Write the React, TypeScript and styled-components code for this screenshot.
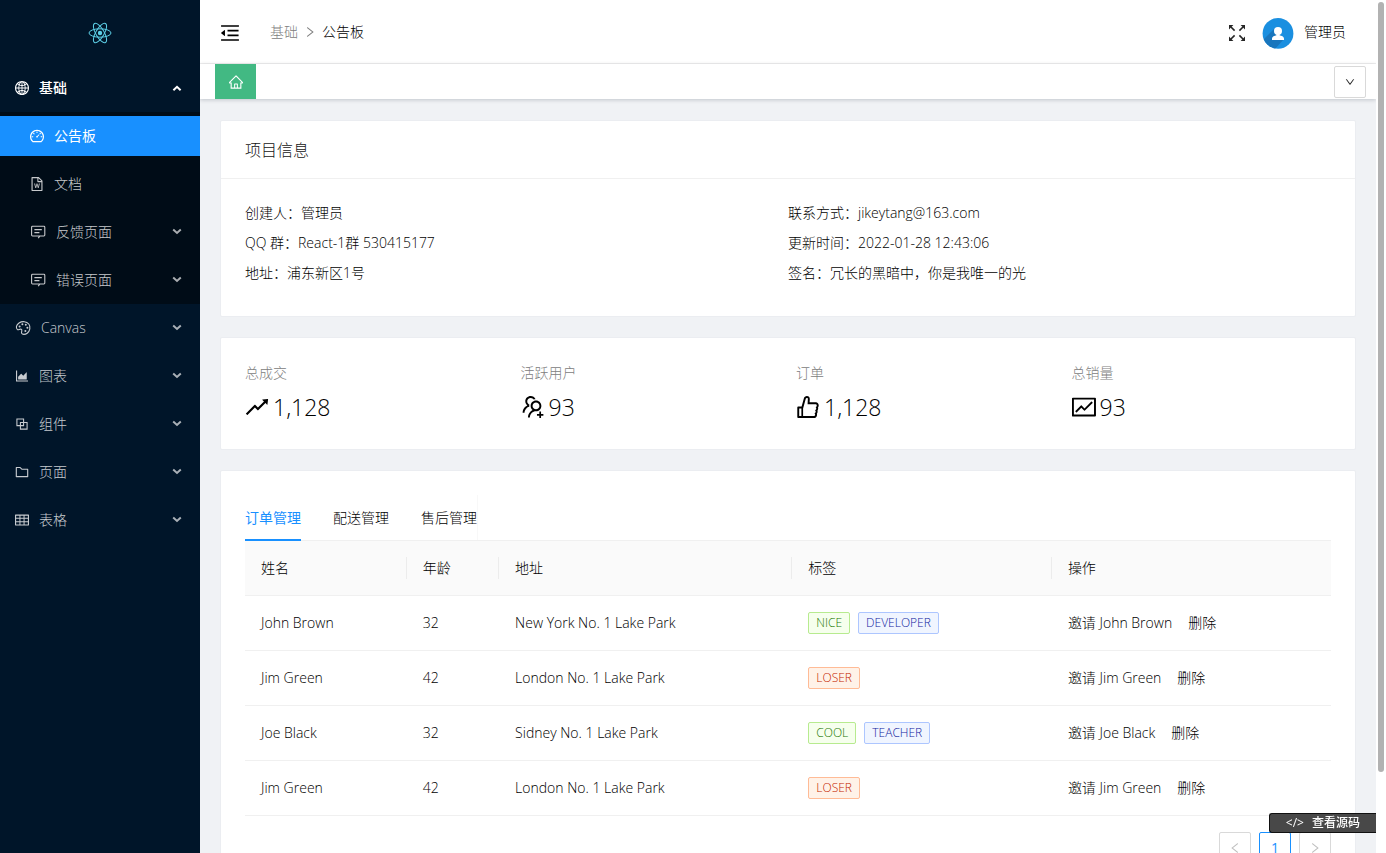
import React from 'react';
import styled, { createGlobalStyle, css } from 'styled-components';
import type { IconType } from 'react-icons';
import {
  AiOutlineGlobal, AiOutlineDashboard, AiOutlineFileWord, AiOutlineAreaChart, AiOutlineBlock,
  AiOutlineFolder, AiOutlineTable, AiOutlineHome, AiOutlineMenuFold, AiOutlineUsergroupAdd,
  AiOutlineLike, AiOutlineFund, AiOutlineRise, AiOutlineLeft, AiOutlineRight, AiOutlineDown,
} from 'react-icons/ai';

const GlobalStyle = createGlobalStyle`
  *, *::before, *::after { box-sizing: border-box; }
  body {
    margin: 0;
    font-family: "Open Sans", "Noto Sans CJK SC", sans-serif;
    font-size: 14px;
    font-weight: 300;
    line-height: 22px;
    color: #000;
    background: #fff;
  }
  button { font: inherit; color: inherit; background: none; border: 0; padding: 0; cursor: pointer; }
  a { color: inherit; text-decoration: none; }
  svg { display: block; flex: none; }
  h2, dl, dd, dt, ul, ol, p { margin: 0; padding: 0; font-weight: inherit; list-style: none; }
`;

const Shell = styled.div`
  display: flex;
  height: 100vh;
  overflow: hidden;
`;

const Sidebar = styled.nav`
  flex: 0 0 200px;
  background: #001529;
  color: rgba(255, 255, 255, 0.78);
`;

const Logo = styled.a`
  display: flex;
  align-items: center;
  justify-content: center;
  height: 64px;
  padding-top: 2px;
`;

const MenuItem = styled.li`
  padding: 4px 0;
`;

const SubMenu = styled.ul`
  background: #000c17;
`;

const MenuButton = styled.button<{ $level?: number; $state?: 'open' | 'selected' }>`
  display: flex;
  align-items: center;
  gap: 10px;
  width: 100%;
  height: 40px;
  padding: 0 17px 0 ${(p) => (p.$level === 2 ? 30 : 15)}px;
  text-align: left;
  ${(p) => p.$state === 'open' && css`color: #fff; font-weight: 500;`}
  ${(p) => p.$state === 'selected' && css`color: #fff; background: #1890ff; font-weight: 400;`}
`;

const MenuLabel = styled.span`
  flex: 1;
`;

const Main = styled.div`
  display: flex;
  flex: 1;
  flex-direction: column;
  min-width: 0;
  overflow: hidden;
  background: #f0f2f5;
`;

const ScrollTrack = styled.div`
  flex: 0 0 10px;
  padding: 2px 2px 0;
  background: #fff;
`;

const ScrollThumb = styled.div`
  height: 770px;
  max-height: 100%;
  border-radius: 3px;
  background: #b2b2b2;
`;

const Header = styled.header`
  display: flex;
  flex: none;
  align-items: center;
  height: 64px;
  padding: 2px 30px 0 20px;
  background: #fff;
  border-bottom: 1px solid #f0f0f0;
`;

const Crumbs = styled.ol`
  display: flex;
  flex: 1;
  align-items: center;
  gap: 6px;
  margin-left: 30px;
  padding-bottom: 2px;
`;

const Crumb = styled.li<{ $muted?: boolean }>`
  display: flex;
  color: ${(p) => (p.$muted ? '#808080' : '#000')};
`;

const UserArea = styled.div`
  display: flex;
  align-items: center;
  gap: 10px;
`;

const UserName = styled.span`
  padding-bottom: 2px;
`;

const FullButton = styled.button`
  margin-right: 6px;
`;

const TabBar = styled.div`
  z-index: 1;
  display: flex;
  flex: none;
  align-items: flex-start;
  justify-content: space-between;
  height: 35px;
  padding: 0 10px 0 15px;
  background: #fff;
  box-shadow: 0 1px 4px rgba(0, 21, 41, 0.2);
`;

const HomeTab = styled.button`
  display: flex;
  align-items: center;
  justify-content: center;
  width: 41px;
  height: 35px;
  color: #fff;
  background: #42b983;
`;

const SquareButton = styled.button<{ $tone?: 'active' | 'disabled' }>`
  display: flex;
  align-items: center;
  justify-content: center;
  width: 32px;
  height: 32px;
  border: 1px solid ${(p) => (p.$tone === 'active' ? '#1890ff' : '#d9d9d9')};
  border-radius: 2px;
  background: #fff;
  color: ${(p) => (p.$tone === 'active' ? '#1890ff' : p.$tone === 'disabled' ? '#bfbfbf' : '#262626')};
  font-weight: 400;
`;

const TabMenu = styled.div`
  padding-top: 2px;
`;

const Content = styled.main`
  display: flex;
  flex: 1;
  flex-direction: column;
  gap: 20px;
  min-height: 0;
  padding: 21px 20px 20px;
  overflow-y: auto;
  scrollbar-width: none;
`;

const Card = styled.section`
  flex: none;
  border: 1px solid #ebedf1;
  border-radius: 2px;
  background: #fff;
`;

const CardHead = styled.header`
  padding: 17px 24px 16px;
  border-bottom: 1px solid #f0f0f0;
`;

const CardTitle = styled.h2`
  color: #141414;
  font-size: 16px;
  line-height: 24px;
`;

const CardBody = styled.div`
  padding: 23px 24px 24px;
`;

const InfoGrid = styled.dl`
  display: grid;
  grid-template-columns: 1fr 1fr;
`;

const InfoRow = styled.div`
  display: flex;
  height: 30px;
`;

const StatGrid = styled.dl`
  display: grid;
  grid-template-columns: repeat(4, 1fr);
  gap: 16px;
  padding-top: 1px;
`;

const StatLabel = styled.dt`
  margin-bottom: 4px;
  color: #808080;
`;

const StatValue = styled.dd`
  display: flex;
  align-items: center;
  gap: 4px;
  height: 37px;
  font-size: 23px;
  line-height: 36px;
`;

const Tabs = styled.div`
  display: flex;
  padding-top: 1px;
  border-bottom: 1px solid #f0f0f0;
`;

const TabList = styled.div`
  display: flex;
  gap: 32px;
  border-right: 1px solid #f8f8f8;
`;

const Tab = styled.button<{ $active?: boolean }>`
  margin-bottom: -1px;
  padding: 12px 0 10px;
  border-bottom: 2px solid ${(p) => (p.$active ? '#1890ff' : 'transparent')};
  color: ${(p) => (p.$active ? '#1890ff' : '#000')};
  ${(p) => p.$active && css`font-weight: 400;`}
`;

const Table = styled.table`
  width: 100%;
  border-collapse: separate;
  border-spacing: 0;
  table-layout: fixed;
`;

const Th = styled.th<{ $width?: string }>`
  width: ${(p) => p.$width ?? 'auto'};
  padding: 0;
  border-bottom: 1px solid #f0f0f0;
  background: #fafafa;
  font-weight: inherit;
  text-align: left;
`;

const ThLabel = styled.div`
  margin: 16px 0;
  padding: 0 16px;
  border-right: 1px solid #ececec;
  ${Th}:last-child & { border-right: 0; }
`;

const Td = styled.td`
  height: 55px;
  padding: 0 16px;
  border-bottom: 1px solid #f0f0f0;
`;

const Inline = styled.div<{ $gap: number }>`
  display: flex;
  align-items: center;
  gap: ${(p) => p.$gap}px;
`;

const tones = {
  green: ['#237804', '#f6ffed', '#b7eb8f'],
  geekblue: ['#10239e', '#f0f5ff', '#adc6ff'],
  volcano: ['#c41d00', '#fff2e8', '#ffbb96'],
};

const Tag = styled.span<{ $tone: keyof typeof tones }>`
  padding: 0 7px;
  border: 1px solid ${(p) => tones[p.$tone][2]};
  border-radius: 2px;
  background: ${(p) => tones[p.$tone][1]};
  color: ${(p) => tones[p.$tone][0]};
  font-size: 12px;
  line-height: 20px;
`;

const Pagination = styled.div`
  display: flex;
  justify-content: flex-end;
  gap: 8px;
  padding-top: 16px;
`;

const SourceLink = styled.a`
  position: fixed;
  right: 10px;
  bottom: 20px;
  z-index: 2;
  display: flex;
  align-items: center;
  gap: 8px;
  height: 20px;
  padding: 0 16px;
  border: 1px solid #111;
  border-right: 0;
  border-radius: 3px 0 0 3px;
  background: #484848;
  color: #fff;
  font-size: 12px;
  font-weight: 500;
  line-height: 18px;
`;

// Crops the icon set's built-in margin so the glyph fills its box.
function Icon({ as: Glyph, size = 14 }: { as: IconType; size?: number }) {
  return <Glyph size={size} viewBox="64 64 896 896" />;
}

function ReactMark() {
  return (
    <svg width="24" height="24" viewBox="0 0 24 24" fill="none" stroke="#5ccfe6" strokeWidth="1">
      <circle cx="12" cy="12" r="2.2" fill="#5ccfe6" stroke="none" />
      <ellipse cx="12" cy="12" rx="11" ry="4.2" />
      <ellipse cx="12" cy="12" rx="11" ry="4.2" transform="rotate(60 12 12)" />
      <ellipse cx="12" cy="12" rx="11" ry="4.2" transform="rotate(120 12 12)" />
    </svg>
  );
}

function FeedbackIcon() {
  return (
    <svg width="16" height="16" viewBox="0 0 16 16" fill="none" stroke="currentColor" strokeWidth="1.1">
      <path d="M10.4 12 H13.9 a.9.9 0 0 0 .9-.9 V3.2 a.9.9 0 0 0-.9-.9 H2.5 a.9.9 0 0 0-.9.9 v7.9 a.9.9 0 0 0 .9.9 H9.9 L8.2 14.2" />
      <path d="M4.4 5.6 h7.4 M4.4 8.6 h5" />
    </svg>
  );
}

function PaletteIcon() {
  return (
    <svg width="16" height="16" viewBox="0 0 16 16" fill="none" stroke="currentColor" strokeWidth="1.1">
      <path d="M6.2 9.2 C4.6 8.6 3.6 10.4 2.4 9.6 C.6 8.2 1.2 4.8 4 3 C7.2 .9 11.6 1.3 13.8 4 C15.9 6.8 15 11.2 12.2 13.2 C10.2 14.7 7.4 14.8 6.6 13.3 C5.9 11.9 8 10.2 6.2 9.2 Z" />
      <g fill="currentColor" stroke="none">
        <circle cx="4.6" cy="6.4" r="1" /><circle cx="7.4" cy="4.3" r="1" /><circle cx="10.8" cy="4.8" r="1" />
        <circle cx="12.4" cy="7.8" r="1" /><circle cx="10.4" cy="11" r="1" />
      </g>
    </svg>
  );
}

function Chevron({ up }: { up?: boolean }) {
  return (
    <svg width="12" height="12" viewBox="0 0 12 12" fill="none" stroke="currentColor" strokeWidth="2" opacity={up ? 1 : 0.85}>
      <path d={up ? 'M2.4 8.2 L6 4.8 L9.6 8.2' : 'M2.2 3.6 L6 7 L9.8 3.6'} />
    </svg>
  );
}

function FullscreenIcon() {
  return (
    <svg width="18" height="18" viewBox="0 0 18 18" fill="#262626" stroke="#262626" strokeWidth="1.6">
      <path d="M3 3 L6.6 6.6 M15 3 L11.4 6.6 M3 15 L6.6 11.4 M15 15 L11.4 11.4" />
      <path stroke="none" d="M1 1 H5.4 L1 5.4 Z M17 1 V5.4 L12.6 1 Z M1 17 V12.6 L5.4 17 Z M17 17 H12.6 L17 12.6 Z" />
    </svg>
  );
}

function Avatar() {
  return (
    <svg width="32" height="32" viewBox="0 0 32 32">
      <defs><clipPath id="avatar-disc"><circle cx="16" cy="16.4" r="15.4" /></clipPath></defs>
      <g clipPath="url(#avatar-disc)">
        <rect width="32" height="32" fill="#1a8fe0" />
        <path d="M12 12 L0 24 V32 H13 L22 22 Z" fill="#1976bd" />
      </g>
      <circle cx="16" cy="14" r="4" fill="#fff" />
      <path d="M10 23 V21.6 C10 19.6 12.6 18.6 14.4 18.2 V16 H17.6 V18.2 C19.4 18.6 22 19.6 22 21.6 V23 Z" fill="#fff" />
    </svg>
  );
}

const children = [
  { label: '公告板', icon: <Icon as={AiOutlineDashboard} />, selected: true },
  { label: '文档', icon: <Icon as={AiOutlineFileWord} /> },
  { label: '反馈页面', icon: <FeedbackIcon />, more: true },
  { label: '错误页面', icon: <FeedbackIcon />, more: true },
];

const roots = [
  { label: 'Canvas', icon: <PaletteIcon /> },
  { label: '图表', icon: <Icon as={AiOutlineAreaChart} /> },
  { label: '组件', icon: <Icon as={AiOutlineBlock} /> },
  { label: '页面', icon: <Icon as={AiOutlineFolder} /> },
  { label: '表格', icon: <Icon as={AiOutlineTable} /> },
];

const info = [
  { label: '创建人', value: '管理员' },
  { label: '联系方式', value: 'jikeytang@163.com' },
  { label: 'QQ 群', value: 'React-1群 530415177' },
  { label: '更新时间', value: '2022-01-28 12:43:06' },
  { label: '地址', value: '浦东新区1号' },
  { label: '签名', value: '冗长的黑暗中\uFF0C你是我唯一的光' },
];

const stats = [
  { label: '总成交', value: '1,128', icon: AiOutlineRise },
  { label: '活跃用户', value: '93', icon: AiOutlineUsergroupAdd },
  { label: '订单', value: '1,128', icon: AiOutlineLike },
  { label: '总销量', value: '93', icon: AiOutlineFund },
];

const columns: [string, string?][] = [
  ['姓名', '14.9%'], ['年龄', '8.5%'], ['地址', '27%'], ['标签', '23.9%'], ['操作'],
];

type Row = { name: string; age: number; address: string; tags: [string, keyof typeof tones][] };

const rows: Row[] = [
  { name: 'John Brown', age: 32, address: 'New York No. 1 Lake Park', tags: [['NICE', 'green'], ['DEVELOPER', 'geekblue']] },
  { name: 'Jim Green', age: 42, address: 'London No. 1 Lake Park', tags: [['LOSER', 'volcano']] },
  { name: 'Joe Black', age: 32, address: 'Sidney No. 1 Lake Park', tags: [['COOL', 'green'], ['TEACHER', 'geekblue']] },
  { name: 'Jim Green', age: 42, address: 'London No. 1 Lake Park', tags: [['LOSER', 'volcano']] },
];

export default function App() {
  return (
    <>
      <GlobalStyle />
      <Shell>
        <Sidebar>
          <Logo href="#" aria-label="首页"><ReactMark /></Logo>
          <ul>
            <MenuItem>
              <MenuButton $state="open"><Icon as={AiOutlineGlobal} /><MenuLabel>基础</MenuLabel><Chevron up /></MenuButton>
            </MenuItem>
            <li>
              <SubMenu>
                {children.map((c) => (
                  <MenuItem key={c.label}>
                    <MenuButton $level={2} $state={c.selected ? 'selected' : undefined}>
                      {c.icon}<MenuLabel>{c.label}</MenuLabel>{c.more && <Chevron />}
                    </MenuButton>
                  </MenuItem>
                ))}
              </SubMenu>
            </li>
            {roots.map((r) => (
              <MenuItem key={r.label}>
                <MenuButton>{r.icon}<MenuLabel>{r.label}</MenuLabel><Chevron /></MenuButton>
              </MenuItem>
            ))}
          </ul>
        </Sidebar>

        <Main>
          <Header>
            <button aria-label="收起菜单"><Icon as={AiOutlineMenuFold} size={20} /></button>
            <Crumbs>
              <Crumb $muted><a href="#">基础</a></Crumb>
              <Crumb $muted><Icon as={AiOutlineRight} size={12} /></Crumb>
              <Crumb>公告板</Crumb>
            </Crumbs>
            <UserArea>
              <FullButton aria-label="全屏"><FullscreenIcon /></FullButton>
              <Avatar />
              <UserName>管理员</UserName>
            </UserArea>
          </Header>
          <TabBar>
            <HomeTab aria-label="首页"><Icon as={AiOutlineHome} size={14} /></HomeTab>
            <TabMenu><SquareButton aria-label="更多"><Icon as={AiOutlineDown} size={10} /></SquareButton></TabMenu>
          </TabBar>

          <Content>
            <Card>
              <CardHead><CardTitle>项目信息</CardTitle></CardHead>
              <CardBody>
                <InfoGrid>
                  {info.map((i) => (
                    <InfoRow key={i.label}><dt>{i.label}{'\uFF1A'}</dt><dd>{i.value}</dd></InfoRow>
                  ))}
                </InfoGrid>
              </CardBody>
            </Card>

            <Card>
              <CardBody>
                <StatGrid>
                  {stats.map((s) => (
                    <div key={s.label}>
                      <StatLabel>{s.label}</StatLabel>
                      <StatValue><Icon as={s.icon} size={24} />{s.value}</StatValue>
                    </div>
                  ))}
                </StatGrid>
              </CardBody>
            </Card>

            <Card>
              <CardBody>
                <Tabs>
                  <TabList role="tablist">
                    <Tab role="tab" aria-selected="true" $active>订单管理</Tab>
                    <Tab role="tab" aria-selected="false">配送管理</Tab>
                    <Tab role="tab" aria-selected="false">售后管理</Tab>
                  </TabList>
                </Tabs>
                <Table>
                  <thead>
                    <tr>{columns.map(([c, w]) => <Th key={c} $width={w}><ThLabel>{c}</ThLabel></Th>)}</tr>
                  </thead>
                  <tbody>
                    {rows.map((r, i) => (
                      <tr key={i}>
                        <Td>{r.name}</Td>
                        <Td>{r.age}</Td>
                        <Td>{r.address}</Td>
                        <Td><Inline $gap={8}>{r.tags.map(([t, tone]) => <Tag key={t} $tone={tone}>{t}</Tag>)}</Inline></Td>
                        <Td><Inline $gap={16}><a href="#">邀请 {r.name}</a><a href="#">删除</a></Inline></Td>
                      </tr>
                    ))}
                  </tbody>
                </Table>
                <Pagination>
                  <SquareButton $tone="disabled" aria-label="上一页"><Icon as={AiOutlineLeft} size={12} /></SquareButton>
                  <SquareButton $tone="active">1</SquareButton>
                  <SquareButton $tone="disabled" aria-label="下一页"><Icon as={AiOutlineRight} size={12} /></SquareButton>
                </Pagination>
              </CardBody>
            </Card>
          </Content>
        </Main>
        <ScrollTrack><ScrollThumb /></ScrollTrack>
      </Shell>
      <SourceLink href="#"><span>&lt;/&gt;</span><span>查看源码</span></SourceLink>
    </>
  );
}
